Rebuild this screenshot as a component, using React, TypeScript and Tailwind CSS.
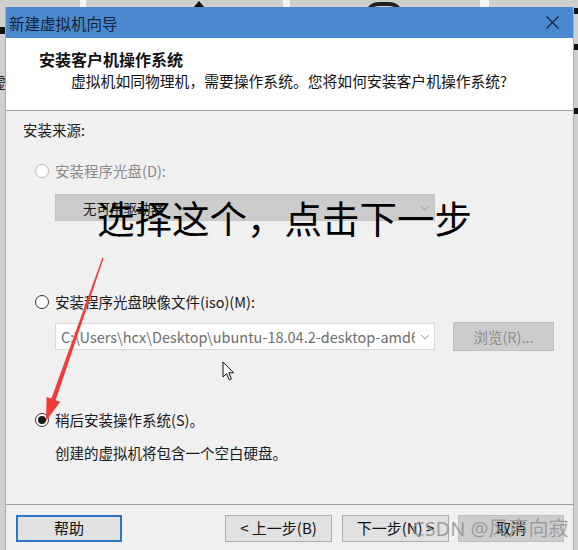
import React from "react";

function Radio({ state }: { state: "disabled" | "off" | "on" }) {
  const border = state === "disabled" ? "border-[#bcbcbc]" : "border-[#333333]";
  return (
    <span
      className={`w-[14px] h-[14px] rounded-full border ${border} bg-white flex items-center justify-center shrink-0`}
    >
      {state === "on" && <span className="w-[8px] h-[8px] rounded-full bg-[#1a1a1a]" />}
    </span>
  );
}

function Chevron({ color }: { color: string }) {
  return (
    <svg width="10" height="6" viewBox="0 0 10 6" className="shrink-0">
      <path d="M1 1 L5 5 L9 1" fill="none" stroke={color} strokeWidth="1" />
    </svg>
  );
}

export default function App() {
  return (
    <div className="relative w-[578px] h-[550px] overflow-hidden bg-[#cfcfcf] font-['Noto_Sans_CJK_SC','Noto_Sans',sans-serif] text-[#111]">
      {/* background bits behind the window */}
      <div className="absolute left-[80px] top-0 w-[6px] h-[8px] bg-[#f4f4f4]" />
      <div className="absolute left-[283px] top-0 w-[7px] h-[8px] bg-[#f4f4f4]" />
      <div className="absolute left-[480px] top-0 w-[9px] h-[8px] bg-[#f4f4f4]" />
      <div className="absolute left-[193px] top-[1px] w-0 h-0 border-l-[6px] border-r-[6px] border-b-[7px] border-l-transparent border-r-transparent border-b-[#111]" />
      <div className="absolute left-[364px] top-[2px] w-[40px] h-[30px] rounded-full border-[4px] border-[#222]" />
      <div className="absolute left-0 top-[27px] w-[5px] h-[7px] bg-[#111]" />
      <div className="absolute left-[574px] top-[8px] w-[4px] h-[6px] bg-[#111]" />
      <div className="absolute left-[574px] top-[44px] w-[4px] h-[6px] bg-[#111]" />
      <div className="absolute left-[574px] top-[108px] w-[4px] h-[6px] bg-[#111]" />
      <div className="absolute left-0 top-[72px] text-[15px] leading-[20px] text-[#222] w-[5px] overflow-hidden">
        <span className="ml-[-9px]">虚</span>
      </div>

      {/* window */}
      <div className="absolute left-[5px] top-[7px] w-[569px] h-[560px] flex flex-col border-x border-[#8fb3de] bg-[#f0f0f0]">
        {/* title bar */}
        <div className="h-[31px] bg-[#4a89cf] flex items-center justify-between pl-[3px] pr-[14px] shrink-0">
          <span className="text-[15.5px] leading-[20px] text-[#15233a]">新建虚拟机向导</span>
          <svg width="13" height="13" viewBox="0 0 13 13">
            <path d="M0.5 0.5 L12.5 12.5 M12.5 0.5 L0.5 12.5" stroke="#15233a" strokeWidth="1.1" />
          </svg>
        </div>
        {/* header */}
        <div className="h-[73px] bg-white border-b border-[#a0a0a0] shrink-0 flex flex-col pt-[10px]">
          <div className="pl-[33px] text-[16px] leading-[22px] font-bold text-[#111]">安装客户机操作系统</div>
          <div className="pl-[65px] text-[14.8px] leading-[22px] text-[#111]">
            虚拟机如同物理机，需要操作系统。您将如何安装客户机操作系统?
          </div>
        </div>
        {/* body */}
        <div className="flex flex-col pt-[9px] pl-[17px] h-[393px] shrink-0 text-[14.5px]">
          <div className="leading-[20px] text-[#222]">安装来源:</div>

          <div className="mt-[21px] h-[20px] flex items-center pl-[12px] gap-[6px]">
            <Radio state="disabled" />
            <span className="text-[#8a8a8a] leading-[20px]">安装程序光盘(D):</span>
          </div>
          <div className="mt-[13px] ml-[32px] w-[380px] h-[27px] bg-[#cccccc] border border-[#c4c4c4] flex items-center justify-between pl-[27px] pr-[4px]">
            <span className="text-[13.5px] text-[#1a1a1a] leading-[20px]">无可用驱动器</span>
            <Chevron color="#9a9a9a" />
          </div>

          <div className="mt-[71px] h-[20px] flex items-center pl-[12px] gap-[6px]">
            <Radio state="off" />
            <span className="text-[#1a1a1a] leading-[20px]">安装程序光盘映像文件(iso)(M):</span>
          </div>
          <div className="mt-[10px] h-[29px] flex items-center ml-[32px]">
            <div className="w-[380px] h-[27px] bg-white border border-[#d9d9d9] flex items-center justify-between pl-[5px] pr-[4px]">
              <span className="w-[354px] overflow-hidden whitespace-nowrap text-[14.5px] text-[#6d6d6d] leading-[20px]">
                C:\Users\hcx\Desktop\ubuntu-18.04.2-desktop-amd64.iso
              </span>
              <Chevron color="#9a9a9a" />
            </div>
            <div className="ml-[18px] w-[101px] h-[29px] bg-[#cccccc] border border-[#bfbfbf] flex items-center justify-center text-[#8c8c8c] text-[14.5px]">
              浏览(R)...
            </div>
          </div>

          <div className="mt-[59px] h-[20px] flex items-center pl-[12px] gap-[6px]">
            <Radio state="on" />
            <span className="text-[#1a1a1a] leading-[20px]">稍后安装操作系统(S)。</span>
          </div>
          <div className="mt-[13px] pl-[32px] leading-[20px] text-[#1a1a1a]">创建的虚拟机将包含一个空白硬盘。</div>
        </div>
        {/* footer */}
        <div className="border-t border-[#a0a0a0] flex items-start pt-[10px] pl-[10px] text-[15px]">
          <div className="w-[106px] h-[27px] border-2 border-[#2b77c7] bg-[#e1e1e1] flex items-center justify-center text-[#111]">
            帮助
          </div>
          <div className="ml-[103px] w-[107px] h-[27px] border border-[#adadad] bg-[#e1e1e1] flex items-center justify-center text-[#111]">
            &lt; 上一步(B)
          </div>
          <div className="ml-[10px] w-[107px] h-[27px] border border-[#adadad] bg-[#e1e1e1] flex items-center justify-center text-[#111]">
            下一步(N) &gt;
          </div>
          <div className="ml-[9px] w-[106px] h-[27px] border border-[#bfbfbf] bg-[#cccccc] flex items-center justify-center text-[#111]">
            取消
          </div>
        </div>
      </div>

      {/* overlay annotation text */}
      <div className="absolute left-[97px] top-[193px] text-[37.5px] leading-[48px] text-black whitespace-nowrap">
        选择这个，点击下一步
      </div>

      {/* red arrow */}
      <svg className="absolute left-0 top-0" width="578" height="550" viewBox="0 0 578 550">
        <polygon
          points="102.4,257.8 103.6,258.2 55.6,400.2 60.2,401.8 46,421 46.6,397 51.4,398.6"
          fill="#f03a3a"
        />
      </svg>

      {/* mouse cursor */}
      <svg className="absolute left-[222px] top-[361px]" width="14" height="21" viewBox="0 0 14 21">
        <path
          d="M1 1 L1 16 L4.5 12.6 L7.2 18.8 L9.4 17.9 L6.8 11.8 L11.6 11.8 Z"
          fill="#ffffff"
          stroke="#111"
          strokeWidth="1"
          strokeLinejoin="round"
        />
      </svg>

      {/* watermark */}
      <div className="absolute left-[412px] top-[516px] text-[20px] leading-[26px] text-[#8f8f8f]/80 whitespace-nowrap font-['Noto_Sans','Noto_Sans_CJK_SC',sans-serif]">
        CSDN @风声向寂
      </div>
    </div>
  );
}
